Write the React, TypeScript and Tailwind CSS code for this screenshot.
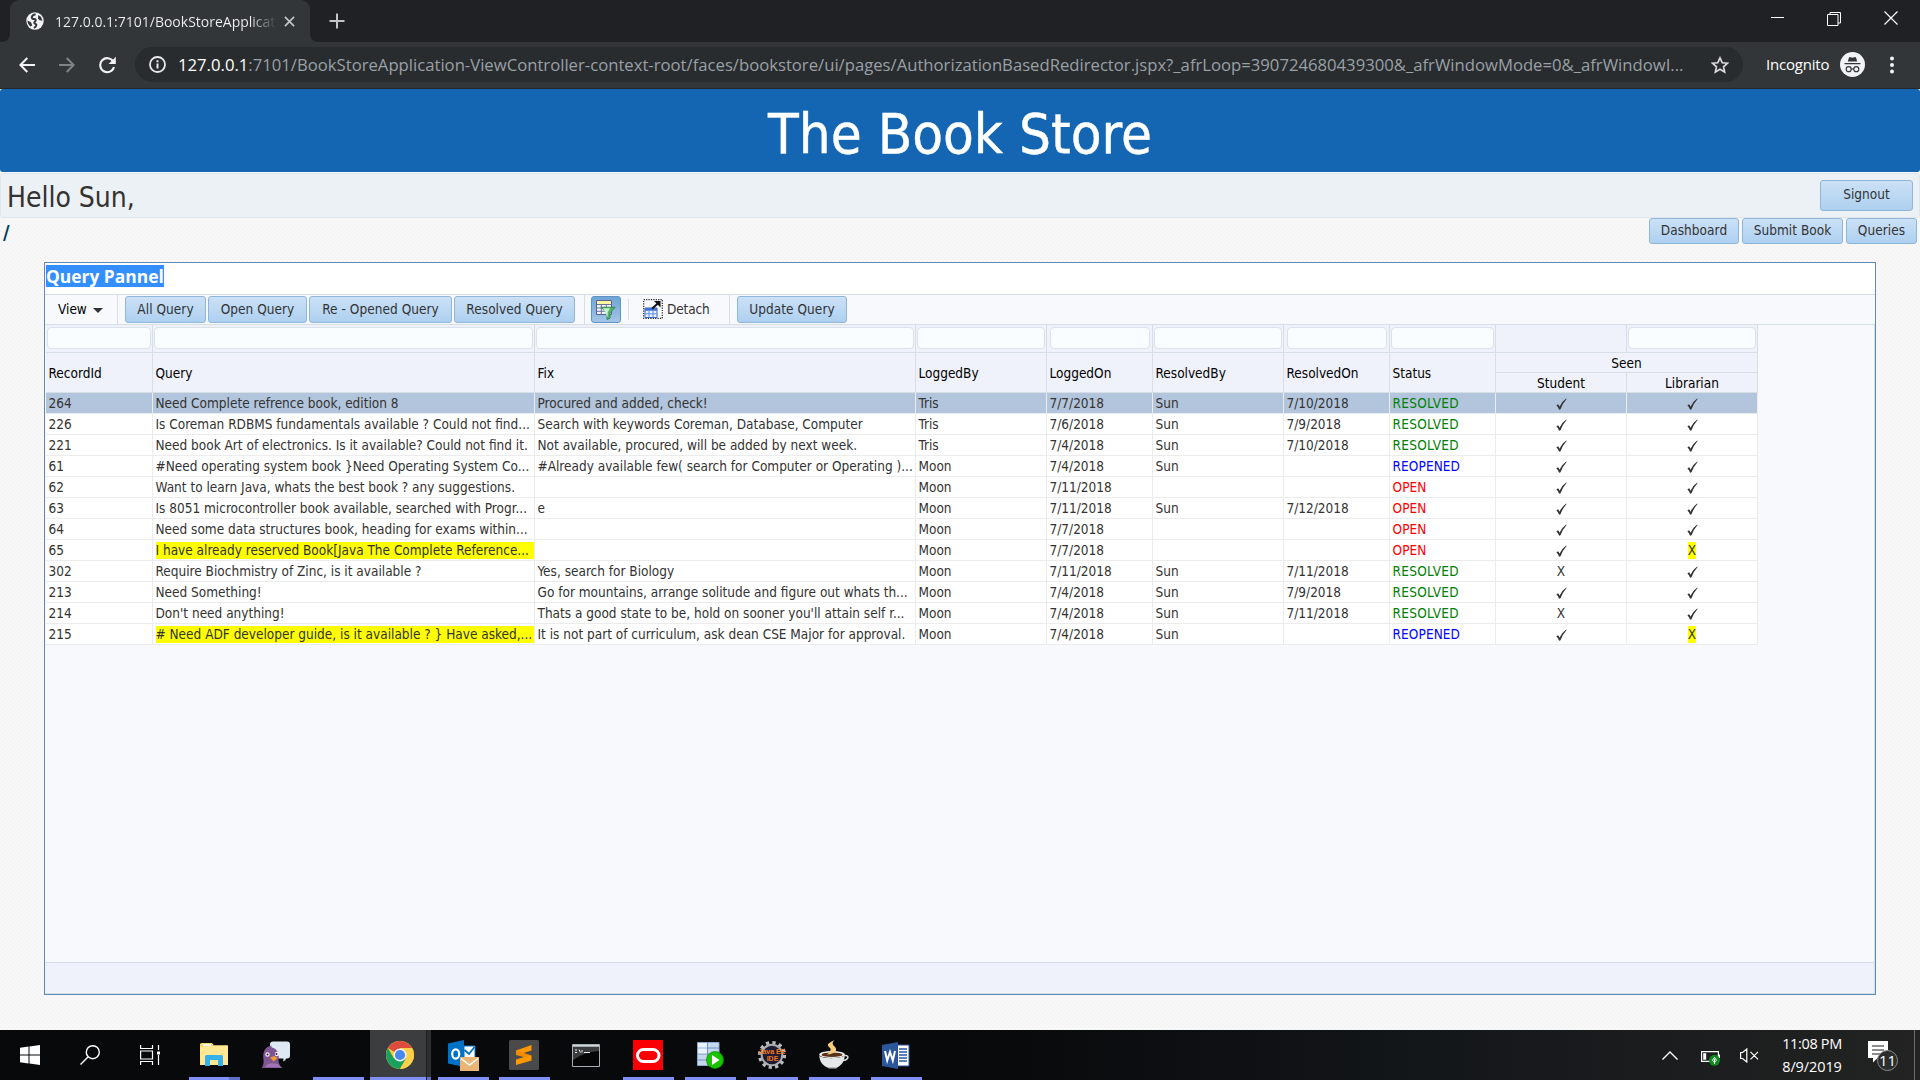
import type { ReactNode } from "react";

const UI = "font-['Open_Sans','Noto_Sans',sans-serif]";

/* ---------- browser chrome ---------- */

function GlobeIcon() {
  return (
    <svg viewBox="0 0 18 18" className="size-[18px]">
      <circle cx="9" cy="9" r="8.7" fill="#f1f3f4" />
      <path d="M9.600 2.200c-2 .3-3.600 1.600-3.800 3-.2 1.300 1 1.900 2.400 1.900 1.200 0 1.700.6 1.500 1.500-.2.900-1.500 1.100-1.400 2.200.1 1.100 1.900.9 2.100 2 .2 1.200-1 2.200-2.400 3.200" fill="none" stroke="#323639" strokeWidth="2" />
      <path d="M1.500 8.500l3.500 1.800 1.300 3.200-1.800 1C2.600 13 1.500 11 1.500 8.500z" fill="#323639" />
      <path d="M12.300 3l2.600 1.800 1.500 4-2.800-.6-1.600-2z" fill="#323639" />
    </svg>
  );
}

function TabStrip() {
  return (
    <div className={`flex h-[42px] bg-[#202124] ${UI}`}>
      <div className="flex w-[10px] items-end bg-[#323639]">
        <div className="h-full w-full rounded-br-[8px] bg-[#202124]" />
      </div>
      <div className="flex w-[300px] items-center rounded-t-[9px] bg-[#323639] pl-4">
        <GlobeIcon />
        <div className="ml-[11px] w-[222px] whitespace-nowrap bg-linear-to-r from-[#f1f3f4] from-[88%] to-[#323639] bg-clip-text text-[14px] text-transparent">
          127.0.0.1:7101/BookStoreApplicat
        </div>
        <svg viewBox="0 0 12 12" className="ml-[7px] size-[11px]" stroke="#c3c6c9" strokeWidth="1.800">
          <path d="M1 1l10 10M11 1L1 11" />
        </svg>
      </div>
      <div className="flex w-[10px] bg-[#323639]">
        <div className="h-full w-full rounded-bl-[8px] bg-[#202124]" />
      </div>
      <svg viewBox="0 0 16 16" className="mt-[13px] ml-[9px] size-[16px]" stroke="#c3c6c9" strokeWidth="2">
        <path d="M8 .5v15M.5 8h15" />
      </svg>
      <div className="ml-auto flex w-[172px] items-start">
        <svg viewBox="0 0 13 13" className="mt-[11px] ml-[23px] size-[13px]" fill="#fff">
          <path d="M0 6h13v1H0z" />
        </svg>
        <svg viewBox="0 0 14 14" className="mt-3 ml-[43px] size-[14px]" stroke="#fff" fill="none">
          <path d="M.5 2.500h10.500v11H.5zM3 2.500v-2h10.500v10.500h-2.500" />
        </svg>
        <svg viewBox="0 0 14 14" className="mt-[11px] ml-[43px] size-[14px]" stroke="#fff" strokeWidth="1.200">
          <path d="M.5.5l13 13M13.500.5l-13 13" />
        </svg>
      </div>
    </div>
  );
}

function AddressBar() {
  return (
    <div className={`flex h-[47px] items-center border-b border-[#242628] bg-[#323639] pb-px ${UI}`}>
      <svg viewBox="0 0 16 16" className="ml-[19px] size-4" stroke="#f1f3f4" strokeWidth="2" fill="none">
        <path d="M16 8H1.500M8.300 1L1.400 8l6.900 7" />
      </svg>
      <svg viewBox="0 0 16 16" className="ml-6 size-4" stroke="#7f8385" strokeWidth="2" fill="none">
        <path d="M0 8h14.500M7.700 1l6.900 7-6.900 7" />
      </svg>
      <svg viewBox="0 0 18 18" className="ml-[23px] size-[18px]" stroke="#f1f3f4" strokeWidth="2.100" fill="none">
        <path d="M15.200 5.500A7 7 0 1 0 16 11" />
        <path d="M17.800.8v7.200h-7.200z" fill="#f1f3f4" stroke="none" />
      </svg>
      <div className="ml-[19px] flex h-[35px] w-[1608px] items-center rounded-full bg-[#282c2f] pl-[14px]">
        <svg viewBox="0 0 17 17" className="size-[17px]" stroke="#e8eaed" strokeWidth="1.800" fill="none">
          <circle cx="8.500" cy="8.500" r="7.500" />
          <path d="M8.500 7.500v5M8.500 4.300v1.900" strokeWidth="2" />
        </svg>
        <div className="ml-[12px] w-[1520px] whitespace-nowrap text-[16.68px] text-[#9aa0a6]">
          <span className="text-white">127.0.0.1</span>
          :7101/BookStoreApplication-ViewController-context-root/faces/bookstore/ui/pages/AuthorizationBasedRedirector.jspx?_afrLoop=390724680439300&amp;_afrWindowMode=0&amp;_afrWindowI...
        </div>
        <svg viewBox="0 0 18 18" className="ml-[13px] size-[18px]" stroke="#dadce0" strokeWidth="1.600" fill="none">
          <path d="M9 1.800l2.200 4.900 5.300.5-4 3.600 1.200 5.200L9 13.200 4.300 16l1.200-5.200-4-3.600 5.300-.5z" />
        </svg>
      </div>
      <div className="ml-[23px] w-[63px] text-[15px] tracking-[-0.200px] whitespace-nowrap text-white">Incognito</div>
      <svg viewBox="0 0 25 25" className="ml-[11px] size-[25px]">
        <circle cx="12.500" cy="12.500" r="12.500" fill="#f1f3f4" />
        <path d="M9 5.500l.8-.4 2.700.6 2.700-.6.8.4 1.200 4H7.800zM4.500 11h16v1.300h-16z" fill="#323639" />
        <path d="M11.200 17.200q1.300-.9 2.600 0" fill="none" stroke="#323639" strokeWidth="1.200" />
        <circle cx="8.700" cy="17.200" r="2.500" fill="none" stroke="#323639" strokeWidth="1.200" />
        <circle cx="16.300" cy="17.200" r="2.500" fill="none" stroke="#323639" strokeWidth="1.200" />
      </svg>
      <svg viewBox="0 0 4 18" className="ml-[25px] h-[18px] w-1" fill="#f1f3f4">
        <circle cx="2" cy="2.500" r="2" />
        <circle cx="2" cy="9" r="2" />
        <circle cx="2" cy="15.500" r="2" />
      </svg>
    </div>
  );
}

/* ---------- application page ---------- */

function Button({ children, className }: { children: ReactNode; className: string }) {
  return (
    <button
      className={`flex shrink-0 items-center justify-center rounded-[3px] border border-[#8fb6d9] bg-linear-to-b from-[#cbe1f6] to-[#aed0f0] pb-px text-[13.500px] tracking-[0.050px] whitespace-nowrap text-[#333] ${className}`}
    >
      {children}
    </button>
  );
}

function FilterIcon() {
  return (
    <svg viewBox="0 0 20 20" className="size-5">
      <path d="M.5.5h15v14H.5z" fill="#f4f6fb" stroke="#5a5f8f" />
      <path d="M1 1h14v3.500H1z" fill="#fdf3a0" />
      <path d="M.5 4.500h15M.5 8h15M.5 11.300h12M5.300 4.500v10M10.300 4.500v10" stroke="#6a6fa5" fill="none" />
      <path d="M4.800 7.200h14.400l-5.200 5.800v5.200l-3 1.300V13z" fill="#52b56a" stroke="#2c7d48" strokeWidth=".8" />
      <path d="M7 8.300h7l-2.300 4.200v5z" fill="#c5f2cc" />
    </svg>
  );
}

function DetachIcon() {
  return (
    <svg viewBox="0 0 20 20" className="size-5">
      <path d="M.7.7h18.600v18.600H.7z" fill="#fbfcff" stroke="#222" strokeWidth="1.200" strokeDasharray="1.200 1.200" />
      <path d="M2 9h12v9.500H2z" fill="#eaf2ff" stroke="#3a66c4" strokeWidth="1" />
      <path d="M2 9h12v2.800H2z" fill="#3f74dd" />
      <path d="M2 14.800h12M6 12v6.500M10 12v6.500" stroke="#5f8ce6" />
      <path d="M9 9.800l5.500-5" stroke="#111" strokeWidth="2" />
      <path d="M11 2h6.500v6.500z" fill="#111" />
    </svg>
  );
}

function Toolbar() {
  return (
    <div className="flex h-[30px] shrink-0 items-center border-t border-[#d6dfe6] bg-[#f8f9fd] text-[13.500px]">
      <div className="flex h-full w-[73px] items-center border-r border-[#d6dfe6] pb-px pl-[13px] text-black">
        View
        <span className="mt-[3px] ml-[6px] border-x-[5px] border-t-[5px] border-x-transparent border-t-[#333]" />
      </div>
      <div className="ml-[7px] flex gap-[2px]">
        <Button className="h-[27px] w-[81px]">All Query</Button>
        <Button className="h-[27px] w-[99px]">Open Query</Button>
        <Button className="h-[27px] w-[143px]">Re - Opened Query</Button>
        <Button className="h-[27px] w-[121px]">Resolved Query</Button>
      </div>
      <div className="ml-[9px] h-full w-px bg-[#d6dfe6]" />
      <div className="ml-[6px] flex h-[27px] w-[30px] items-center justify-center rounded-[3px] border border-[#5f93c4] bg-linear-to-b from-[#6ea5d6] to-[#a3c5e6]">
        <FilterIcon />
      </div>
      <div className="ml-[7px] h-[21px] w-px bg-[#d6dfe6]" />
      <div className="ml-[14px] flex w-[86px] items-center gap-[4px] pb-px tracking-[-0.150px] text-[#333]">
        <DetachIcon />
        Detach
      </div>
      <div className="h-full w-px bg-[#d6dfe6]" />
      <Button className="ml-[7px] h-[27px] w-[110px]">Update Query</Button>
    </div>
  );
}

const GRID = "grid w-[1712px] shrink-0 grid-cols-[107px_382px_381px_131px_106px_131px_106px_106px_131px_131px]";
const HEAD_CELL = "border-r border-b border-[#d6dfe6]";

const FILTERS = [
  "ml-px mr-px",
  "ml-px mr-px",
  "ml-px mr-px",
  "ml-px mr-px",
  "ml-[3px] mr-[2px]",
  "ml-px mr-px",
  "ml-[3px] mr-[2px]",
  "ml-px mr-px",
  "",
  "ml-px mr-px",
];

const HEADERS = ["RecordId", "Query", "Fix", "LoggedBy", "LoggedOn", "ResolvedBy", "ResolvedOn", "Status"];

type Status = "RESOLVED" | "REOPENED" | "OPEN";
type Row = [string, string, string, string, string, string, string, Status, boolean, boolean];

const ROWS: Row[] = [
  ["264", "Need Complete refrence book, edition 8", "Procured and added, check!", "Tris", "7/7/2018", "Sun", "7/10/2018", "RESOLVED", true, true],
  ["226", "Is Coreman RDBMS fundamentals available ? Could not find...", "Search with keywords Coreman, Database, Computer", "Tris", "7/6/2018", "Sun", "7/9/2018", "RESOLVED", true, true],
  ["221", "Need book Art of electronics. Is it available? Could not find it.", "Not available, procured, will be added by next week.", "Tris", "7/4/2018", "Sun", "7/10/2018", "RESOLVED", true, true],
  ["61", "#Need operating system book }Need Operating System Co...", "#Already available few( search for Computer or Operating )...", "Moon", "7/4/2018", "Sun", "", "REOPENED", true, true],
  ["62", "Want to learn Java, whats the best book ? any suggestions.", "", "Moon", "7/11/2018", "", "", "OPEN", true, true],
  ["63", "Is 8051 microcontroller book available, searched with Progr...", "e", "Moon", "7/11/2018", "Sun", "7/12/2018", "OPEN", true, true],
  ["64", "Need some data structures book, heading for exams within...", "", "Moon", "7/7/2018", "", "", "OPEN", true, true],
  ["65", "I have already reserved Book[Java The Complete Reference...", "", "Moon", "7/7/2018", "", "", "OPEN", true, false],
  ["302", "Require Biochmistry of Zinc, is it available ?", "Yes, search for Biology", "Moon", "7/11/2018", "Sun", "7/11/2018", "RESOLVED", false, true],
  ["213", "Need Something!", "Go for mountains, arrange solitude and figure out whats th...", "Moon", "7/4/2018", "Sun", "7/9/2018", "RESOLVED", true, true],
  ["214", "Don't need anything!", "Thats a good state to be, hold on sooner you'll attain self r...", "Moon", "7/4/2018", "Sun", "7/11/2018", "RESOLVED", false, true],
  ["215", "# Need ADF developer guide, is it available ? } Have asked,...", "It is not part of curriculum, ask dean CSE Major for approval.", "Moon", "7/4/2018", "Sun", "", "REOPENED", true, false],
];

const STATUS_COLOR: Record<Status, string> = {
  RESOLVED: "text-[#008000] tracking-[0.300px]",
  REOPENED: "text-[#0000ff] tracking-[0.100px]",
  OPEN: "text-[#ff0000] tracking-[0.100px]",
};

function Seen({ value, flag }: { value: boolean; flag?: boolean }) {
  return (
    <div className="flex items-center justify-center border-r border-b border-[#ececec]">
      {value ? (
        <svg viewBox="0 0 11 12" className="mt-[2px] h-3 w-[11px]" fill="#333">
          <path d="M.4 7.400L2 6.300q1 .9 1.500 2.500Q6 3.200 10.200.4l.4.500Q6.800 5 4.500 11.300l-1.400.4Q2.200 8.700.4 7.400z" />
        </svg>
      ) : (
        <span className={flag ? "bg-[#ffff00] leading-[17px]" : "leading-[17px]"}>X</span>
      )}
    </div>
  );
}

function DataRow({ row, index }: { row: Row; index: number }) {
  const [id, query, fix, by, on, rBy, rOn, status, student, librarian] = row;
  const cell = "flex items-center overflow-hidden border-r border-b border-[#ececec] pl-[2.500px] whitespace-nowrap";
  return (
    <div className={`${GRID} h-[21px] ${index === 0 ? "bg-[#b2c5dc]" : "bg-white"}`}>
      <div className={cell}>{id}</div>
      <div className={cell}>
        <span className={librarian ? "leading-[17px]" : "w-full bg-[#ffff00] leading-[17px]"}>{query}</span>
      </div>
      <div className={cell}>{fix}</div>
      <div className={cell}>{by}</div>
      <div className={cell}>{on}</div>
      <div className={cell}>{rBy}</div>
      <div className={cell}>{rOn}</div>
      <div className={`${cell} ${STATUS_COLOR[status]}`}>{status}</div>
      <Seen value={student} />
      <Seen value={librarian} flag />
    </div>
  );
}

function QueryTable() {
  return (
    <div className="flex h-[638px] shrink-0 flex-col border-t border-r border-[#d6dfe6] bg-[#f8f9fd] pl-px text-[13.500px] leading-[17px] text-[#333]">
      <div className={`${GRID} h-[28px] bg-[#eff2fb]`}>
        {FILTERS.map((margin, i) => (
          <div key={i} className={`${HEAD_CELL} flex pt-[2px]`}>
            {margin && <div className={`h-[22px] flex-1 rounded-[4px] border border-[#dce2ea] bg-[#f9fdff] ${margin}`} />}
          </div>
        ))}
      </div>
      <div className={`${GRID} h-[40px] bg-[#eff2fb] text-black`}>
        {HEADERS.map((h) => (
          <div key={h} className={`${HEAD_CELL} flex items-center pt-[2px] pl-[2.500px]`}>
            {h}
          </div>
        ))}
        <div className="col-span-2 grid grid-cols-2 grid-rows-2 text-center leading-[20px]">
          <div className={`${HEAD_CELL} col-span-2 h-5`}>Seen</div>
          <div className={`${HEAD_CELL} h-5`}>Student</div>
          <div className={`${HEAD_CELL} h-5`}>Librarian</div>
        </div>
      </div>
      {ROWS.map((row, i) => (
        <DataRow key={row[0]} row={row} index={i} />
      ))}
    </div>
  );
}

function BookStorePage() {
  return (
    <div className="flex h-[941px] flex-col bg-[#f6f6f6] bg-[linear-gradient(45deg,#f9f9f9_25%,#f4f4f4_25%_50%,#f9f9f9_50%_75%,#f4f4f4_75%)] bg-size-[4px_4px] font-['DejaVu_Sans_Condensed','DejaVu_Sans',sans-serif] font-stretch-condensed">
      <header className="flex h-[83px] shrink-0 items-center justify-center rounded-[3px] bg-[#1466b3] pt-[6px] text-[56px] leading-none text-white [-webkit-text-stroke:0.4px_white]">
        The Book Store
      </header>
      <div className="mt-px flex h-[45px] shrink-0 items-center justify-between rounded-[3px] border border-[#dfe6ec] bg-[#ecf1f6] pr-[6px] pl-[6px] text-[#333]">
        <div className="pt-[4px] text-[28px] leading-none">Hello Sun,</div>
        <Button className="mb-px h-[31px] w-[93px]">Signout</Button>
      </div>
      <div className="flex h-[44px] shrink-0 justify-between pr-[3px] pl-[3px]">
        <div className="mt-[2px] text-[20px] leading-[24px] font-bold text-[#003d5b]">/</div>
        <div className="flex gap-[3px]">
          <Button className="h-[26px] w-[90px]">Dashboard</Button>
          <Button className="h-[26px] w-[101px]">Submit Book</Button>
          <Button className="h-[26px] w-[71px]">Queries</Button>
        </div>
      </div>
      <section className="mr-[44px] ml-[44px] flex h-[733px] flex-col border border-[#5f8ab4] bg-white">
        <div className="flex h-[31px] shrink-0 items-start pt-[2px] pl-px">
          <h2 className="bg-[#338fff] font-['Open_Sans',sans-serif] text-[17.400px] leading-[22px] font-bold whitespace-nowrap text-white font-stretch-normal">
            Query Pannel
          </h2>
        </div>
        <Toolbar />
        <QueryTable />
        <div className="h-[32px] shrink-0 border-t border-r border-b border-[#d6dfe6] bg-[#eff2fb]" />
      </section>
    </div>
  );
}

/* ---------- taskbar ---------- */

function ExplorerIcon() {
  return (
    <svg viewBox="0 0 28 24" className="h-6 w-7">
      <path d="M0 1.500Q0 0 1.500 0H12l2 2.500h13q1 0 1 1V22H0z" fill="#fbd66f" />
      <path d="M3 1.200h8v2H3z" fill="#fff" />
      <path d="M0 4h12l2-1.500h14V22H0z" fill="#ffe793" />
      <path d="M5 23V13.500q0-1.500 1.500-1.500h15q1.500 0 1.500 1.500V23h-5v-6H10v6z" fill="#35b1e9" />
    </svg>
  );
}

function PidginIcon() {
  return (
    <svg viewBox="0 0 30 28" className="h-7 w-[30px]">
      <path d="M12 .5h14q3 0 3 3v11q0 3-3 3h-1q0 2-3 3 1-2 .3-3H12q-3 0-3-3v-11q0-3 3-3z" fill="#dfe9f4" />
      <path d="M1 27c1-3 2-5 1.500-8C1.200 9 5 5.500 11 4.500 9.800 5.500 10 6 11 6.500c6 1.500 7.500 7 6.500 12 0 4 1 6 4 8.500z" fill="#7d5591" />
      <path d="M4 26c3-5 8-4 13-3l3 3.500z" fill="#a273b5" />
      <circle cx="6.500" cy="13.500" r="2.200" fill="#f5eefa" />
      <circle cx="16" cy="13" r="2.200" fill="#f5eefa" />
      <circle cx="6.500" cy="13.500" r="1" fill="#312239" />
      <circle cx="15.500" cy="13" r="1" fill="#312239" />
      <path d="M9 16.500l4.500-1.500 3 2-4 3.500z" fill="#f29b33" />
    </svg>
  );
}

function ChromeIcon() {
  return (
    <svg viewBox="0 0 28 28" className="size-7">
      <circle cx="14" cy="14" r="14" fill="#fbc934" />
      <path d="M14 14L1.900 7A14 14 0 0 1 26.100 7z" fill="#dd4b3e" />
      <path d="M1.900 7A14 14 0 0 0 14 28l6.100-10.500L8 17.500z" fill="#1aa15e" />
      <path d="M14 7h12.100A14 14 0 0 1 14 28l6-10.500z" fill="#fdd04a" />
      <circle cx="14" cy="14" r="6.500" fill="#f3f4f5" />
      <circle cx="14" cy="14" r="5.100" fill="#4a87ee" />
    </svg>
  );
}

function OutlookIcon() {
  return (
    <svg viewBox="0 0 31 31" className="size-[31px]">
      <path d="M0 3.500L16 0v27L0 23.500z" fill="#0072c6" />
      <path d="M16 6h11v14H16z" fill="#fff" stroke="#0072c6" />
      <path d="M16.500 10l4.500 4 5.500-7" fill="none" stroke="#0072c6" strokeWidth="1.800" />
      <ellipse cx="7.700" cy="14" rx="3.500" ry="4.600" fill="none" stroke="#fff" strokeWidth="2.200" />
      <path d="M12 17h19v14H12z" fill="#eab677" />
      <path d="M13 18.500l8.500 6.500 8.500-6.500" fill="none" stroke="#fff" strokeWidth="1.500" />
    </svg>
  );
}

function SublimeIcon() {
  return (
    <svg viewBox="0 0 30 30" className="size-[30px]">
      <rect width="30" height="30" rx="1.500" fill="#4a4a4a" />
      <path d="M7 10.500L22.500 5v5.500L14.500 13l8 2.500v5L7 25v-5.500l8-2.500-8-2z" fill="#ff9800" />
      <path d="M14.500 13l8 2.500-7 1.700-8.500-2.700v-4z" fill="#e87f04" opacity=".5" />
    </svg>
  );
}

function TerminalIcon() {
  return (
    <svg viewBox="0 0 28 23" className="h-[23px] w-7">
      <path d="M.5.5h27v22H.5z" fill="#060606" stroke="#a9b0b5" />
      <path d="M1 1h26v1.800H1z" fill="#cfd6da" />
      <path d="M1 3h26v4Q12 8 1 16z" fill="#3a3c3e" />
      <path d="M3 6h2M3 8.500h2M7 5.500l1.500 3M10 6v2.500M12 8.500h6" stroke="#e8e8e8" />
    </svg>
  );
}

function OracleIcon() {
  return (
    <svg viewBox="0 0 30 30" className="size-[30px]">
      <path d="M0 0h30v30H0z" fill="#fa0004" />
      <rect x="4.500" y="9.500" width="21.500" height="12" rx="6" fill="none" stroke="#fff" strokeWidth="3" />
    </svg>
  );
}

function SqlIcon() {
  return (
    <svg viewBox="0 0 27 27" className="size-[27px]">
      <path d="M.5.5h21.500v23H.5z" fill="#c5d8ef" stroke="#8ea9cc" />
      <path d="M.5 6h21.500M.5 12h21.500M.5 18h21.500M10.500.5v23" stroke="#6f8fbb" />
      <path d="M1 1h9v4.500H1zM1 6.500h9v5H1z" fill="#e9f1fa" />
      <circle cx="18" cy="18" r="8.500" fill="#18c300" stroke="#0a8d00" strokeWidth=".7" />
      <path d="M15 13l7.500 5-7.500 5z" fill="#fff" />
    </svg>
  );
}

function JavaEEIcon() {
  return (
    <svg viewBox="0 0 30 30" className="size-[30px]">
      <circle cx="15" cy="15" r="12.400" fill="none" stroke="#b9bcbf" strokeWidth="3.400" strokeDasharray="3.250 3.243" />
      <circle cx="15" cy="15" r="10.300" fill="#1e1b33" stroke="#a9acb0" strokeWidth="2" />
      <text x="15" y="13.800" textAnchor="middle" textLength="27" lengthAdjust="spacingAndGlyphs" className="fill-[#ef7a1f] font-['Liberation_Sans'] text-[7.500px] font-bold">
        Java EE
      </text>
      <text x="15.500" y="20.500" textAnchor="middle" className="fill-[#ef7a1f] font-['Liberation_Sans'] text-[7px] font-bold">
        IDE
      </text>
    </svg>
  );
}

function JavaCupIcon() {
  return (
    <svg viewBox="0 0 30 30" className="size-[30px]">
      <path d="M25 15.500c3.500-.5 4.500 1 3.500 3-1 1.500-3 2-5 2" fill="none" stroke="#d9dadb" strokeWidth="1.500" />
      <ellipse cx="13" cy="14.500" rx="12.800" ry="3.500" fill="#f4f4f4" />
      <ellipse cx="13" cy="14.700" rx="10.500" ry="2.300" fill="#5a3218" />
      <path d="M.3 15.500C2 19 22 19 25.700 15.500 25.500 22 22 25.500 18 27.500H8.500C4 25.500.5 22 .3 15.500z" fill="#e6e7e8" />
      <path d="M8.500 27h10l-1 1.500h-8z" fill="#b9bbbd" />
      <path d="M15.500 0c-5 2.500-8.500 4.500-5.500 7 2 1.700 3 3.500-2 7.500 8-.5 11.500-4.500 7.500-8-2.500-2-2.500-4 0-6.500z" fill="#f8cd78" />
    </svg>
  );
}

function WordIcon() {
  return (
    <svg viewBox="0 0 28 27" className="h-[27px] w-7">
      <path d="M15 3h12v21H15z" fill="#fff" stroke="#2b579a" />
      <path d="M17 7h8M17 10h8M17 13h8M17 16h8M17 19h8" stroke="#2b579a" strokeWidth="1.500" />
      <path d="M0 3L16 0v27L0 24z" fill="#2b579a" />
      <path d="M3 9l2.200 9.500L8 10l2.800 8.500L13 9" fill="none" stroke="#fff" strokeWidth="2" />
    </svg>
  );
}

const APPS: { name: string; icon: ReactNode; running: boolean; active?: boolean; split?: boolean }[] = [
  { name: "explorer", icon: <ExplorerIcon />, running: true, split: true },
  { name: "pidgin", icon: <PidginIcon />, running: false },
  { name: "blank", icon: null, running: true },
  { name: "chrome", icon: <ChromeIcon />, running: true, active: true },
  { name: "outlook", icon: <OutlookIcon />, running: true },
  { name: "sublime", icon: <SublimeIcon />, running: true },
  { name: "terminal", icon: <TerminalIcon />, running: false },
  { name: "oracle", icon: <OracleIcon />, running: true },
  { name: "sql", icon: <SqlIcon />, running: true },
  { name: "javaee", icon: <JavaEEIcon />, running: true },
  { name: "java", icon: <JavaCupIcon />, running: true },
  { name: "word", icon: <WordIcon />, running: true },
];

function TaskbarApp({ app }: { app: (typeof APPS)[number] }) {
  if (app.active) {
    return (
      <div className="flex h-full w-[62px]">
        <div className="flex w-[56px] flex-col items-center border-b-[3px] border-[#8090f8] bg-[#3b3d3f] pt-[11px] pl-[3px]">{app.icon}</div>
        <div className="w-px bg-[#1c1d1e]" />
        <div className="w-[4px] border-b-[3px] border-[#6070c8] bg-[#2c2e30]" />
      </div>
    );
  }
  return (
    <div className={`flex h-full w-[62px] flex-col items-center ${app.name === "outlook" ? "pl-px" : "pr-px"}`}>
      <div className="flex flex-1 items-center pt-[3px] pr-px">{app.icon}</div>
      {app.running && (
        <div className="flex h-[3px] w-[51px] bg-[#8090f8]">
          {app.split && <div className="ml-auto w-[11px] bg-[#6070c8]" />}
        </div>
      )}
      {!app.running && <div className="h-[3px]" />}
    </div>
  );
}

function Taskbar() {
  return (
    <div className={`flex h-[50px] bg-linear-to-r from-[#07090a] from-50% via-[#14171a] via-75% to-[#222322] ${UI}`}>
      <div className="flex w-[60px] items-center justify-center">
        <svg viewBox="0 0 20 20" className="size-5" fill="#fff">
          <path d="M0 2.800L8.500 1.500v8H0zM9.500 1.400L20 0v9.500H9.500zM0 10.500h8.500v8L0 17.200zM9.500 10.500H20V20L9.500 18.600z" />
        </svg>
      </div>
      <div className="flex w-[60px] items-center justify-center">
        <svg viewBox="0 0 20 20" className="size-5" fill="none" stroke="#fff" strokeWidth="1.400">
          <circle cx="12.800" cy="7.200" r="6.500" />
          <path d="M8.200 11.800L.5 19.500" />
        </svg>
      </div>
      <div className="flex w-[64px] items-center justify-center pr-[4px]">
        <svg viewBox="0 0 20 20" className="size-5" fill="none" stroke="#fff" strokeWidth="1.200">
          <path d="M.6 0v3.500h11.900V0M.6 20v-3.500h11.900V20M.6 6h11.900v8H.6zM18.500 0v5M18.500 10v10" />
          <path d="M17 6.500h3v3h-3z" fill="#fff" stroke="none" />
        </svg>
      </div>
      {APPS.map((app) => (
        <TaskbarApp key={app.name} app={app} />
      ))}
      <div className="ml-auto flex h-full w-[258px] items-center">
        <svg viewBox="0 0 16 9" className="h-[9px] w-4" fill="none" stroke="#fff" strokeWidth="1.400">
          <path d="M.5 8.500L8 1l7.500 7.500" />
        </svg>
        <svg viewBox="0 0 20 16" className="mt-[5px] ml-[23px] h-4 w-5" fill="none">
          <path d="M.6 1.600h16.800v9.800H.6z" stroke="#fff" strokeWidth="1.200" />
          <path d="M2.200 3.200h3v6.600h-3zM18 4.500h1v3.500h-1z" fill="#fff" />
          <circle cx="13.500" cy="10.300" r="5.500" fill="#0f8a1f" />
          <path d="M13.500 7.300l2 3-2 2-2-2zM13.500 9v5" stroke="#fff" />
        </svg>
        <svg viewBox="0 0 19 15" className="ml-[19px] h-[15px] w-[19px]" fill="none" stroke="#fff" strokeWidth="1.200">
          <path d="M.6 4.500h2L6.800 1v13L2.600 10.500h-2zM10.500 3.800l7.500 7.500M18 3.800l-7.500 7.500" />
        </svg>
        <div className="ml-4 flex w-[74px] flex-col items-center text-[14.500px] leading-[23px] whitespace-nowrap text-white">
          <span className="tracking-[-0.350px]">11:08 PM</span>
          <span className="tracking-[-0.1px]">8/9/2019</span>
        </div>
        <svg viewBox="0 0 32 32" className="mt-1 ml-[19px] size-8">
          <path d="M0 0h20v17H9.500L5 21.500V17H0z" fill="#fff" />
          <path d="M4 5h12M4 9h12M4 13h8" stroke="#1e1f1f" strokeWidth="1.200" />
          <circle cx="19.500" cy="19.500" r="10" fill="#2c2d2d" stroke="#8c8c8c" />
          <text x="19.500" y="25" textAnchor="middle" className="fill-white font-['Open_Sans'] text-[15px] font-medium">
            11
          </text>
        </svg>
        <div className="mr-[5px] ml-auto h-full w-px bg-[#6b6b6b]" />
      </div>
    </div>
  );
}

export default function App() {
  return (
    <div className="flex h-[1080px] w-[1920px] flex-col overflow-hidden">
      <TabStrip />
      <AddressBar />
      <BookStorePage />
      <Taskbar />
    </div>
  );
}
